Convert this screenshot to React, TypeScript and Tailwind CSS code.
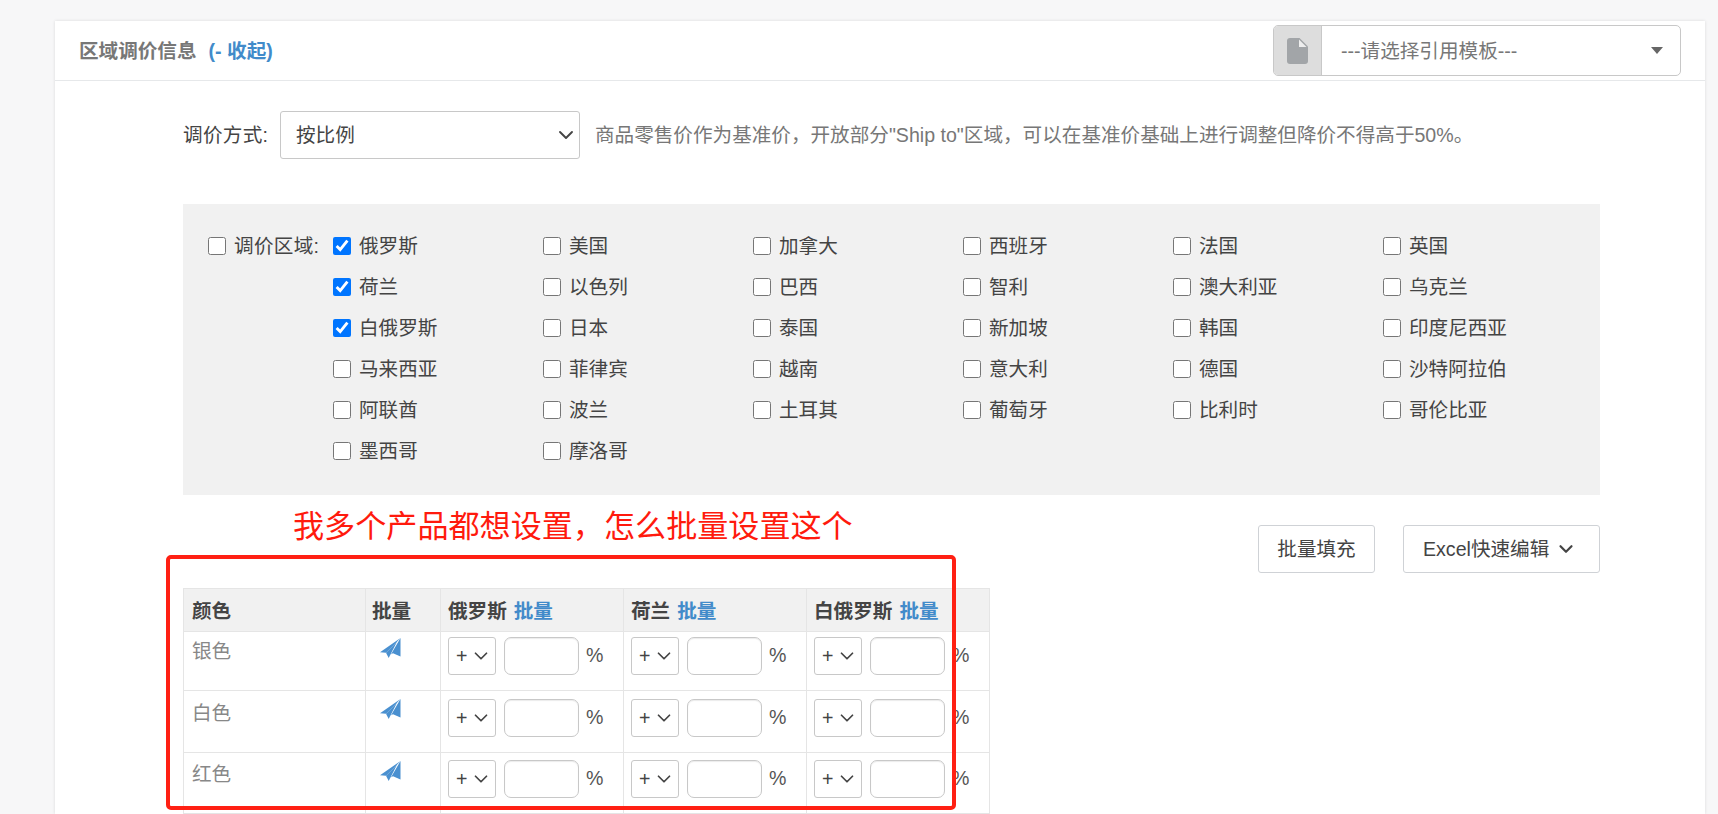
import React from "react";
import { ChevronDown } from "lucide-react";

const regions = [
  ["俄罗斯", true], ["美国"], ["加拿大"], ["西班牙"], ["法国"], ["英国"],
  ["荷兰", true], ["以色列"], ["巴西"], ["智利"], ["澳大利亚"], ["乌克兰"],
  ["白俄罗斯", true], ["日本"], ["泰国"], ["新加坡"], ["韩国"], ["印度尼西亚"],
  ["马来西亚"], ["菲律宾"], ["越南"], ["意大利"], ["德国"], ["沙特阿拉伯"],
  ["阿联酋"], ["波兰"], ["土耳其"], ["葡萄牙"], ["比利时"], ["哥伦比亚"],
  ["墨西哥"], ["摩洛哥"],
] as [string, boolean?][];

const PlaneIcon = () => (
  <svg viewBox="0 0 21 20" className="w-[21px] h-[21px] fill-[#4a90d0]" preserveAspectRatio="none">
    <path d="M0 13.5L20.5 0L17 3.5L6 14Z" />
    <path d="M6 14L17 3.5L8.7 19Z" />
    <path d="M20.5 0V17.5L13 14.5L11 15.5Z" />
  </svg>
);

const FileIcon = () => (
  <svg viewBox="0 0 21 26" className="w-[21px] h-[26px]">
    <path
      d="M3 0H12.5L21 8.5V23a3 3 0 0 1-3 3H3a3 3 0 0 1-3-3V3a3 3 0 0 1 3-3z"
      className="fill-[#a2a5a8]"
    />
    <path d="M12 1.5L19.5 9H12z" className="fill-[#eeeeee]" />
  </svg>
);

// one "+ v  [   ] %" group of a table cell
const PriceCell = ({ pad }: { pad: string }) => (
  <td className={`border border-[#e5e5e5] align-top pl-[7px] ${pad}`}>
    <div className="flex items-center">
      <div className="w-[48px] h-[38px] border border-[#c8c8c8] rounded-[3px] flex items-center pl-[7px] text-[#444]">
        <span className="w-[14px]">+</span>
        <ChevronDown className="w-[22px] h-[22px] shrink-0" strokeWidth={1.9} />
      </div>
      <div className="w-[75px] h-[38px] ml-[8px] border border-[#c8c8c8] rounded-[7px] shadow-[inset_0_1px_1px_rgba(0,0,0,0.08)]"></div>
      <span className="ml-[7px] pb-[3px] text-[#555]">%</span>
    </div>
  </td>
);

const rows = [
  { name: "银色", height: "h-[59px]", text: "pt-[5px]", icon: "pt-[6px]", cell: "pt-[5px]" },
  { name: "白色", height: "h-[62px]", text: "pt-[8px]", icon: "pt-[8px]", cell: "pt-[8px]" },
  { name: "红色", height: "h-[61px]", text: "pt-[7px]", icon: "pt-[8px]", cell: "pt-[7px]" },
];
const heads = ["俄罗斯", "荷兰", "白俄罗斯"];

export default function App() {
  return (
    <div
      className="relative h-[814px] overflow-hidden bg-[#f7f7f8] pt-[21px] pl-[55px] text-[19.6px] leading-[28px] text-[#555]"
      style={{ fontFamily: '"Liberation Sans", "Noto Sans CJK SC", sans-serif' }}
    >
      <div className="w-[1650px] h-[793px] bg-white shadow-[0_0_3px_rgba(0,0,0,0.12)]">
        {/* Header */}
        <div className="h-[60px] border-b border-[#e6e8ea] flex items-center justify-between pl-[24px] pr-[24px]">
          <div className="font-bold text-[#777] pt-[1px]">
            区域调价信息<span className="ml-[12px] text-[#428bca]">(- 收起)</span>
          </div>
          <div className="flex w-[408px] h-[51px] border border-[#c8c8c8] rounded-[5px] overflow-hidden">
            <div className="w-[48px] bg-[#dddddd] border-r border-[#c8c8c8] flex items-center justify-center">
              <FileIcon />
            </div>
            <div className="flex-1 flex items-center justify-between pl-[19px] pr-[17px] text-[#777]">
              <span>---请选择引用模板---</span>
              <span className="border-x-[6px] border-x-transparent border-t-[7px] border-t-[#666]"></span>
            </div>
          </div>
        </div>

        <div className="pl-[128px] pr-[105px]">
          {/* Pricing mode */}
          <div className="flex items-center pt-[30px]">
            <span className="text-[#444] w-[97px] tracking-[0.3px]">调价方式:</span>
            <div className="w-[300px] h-[48px] border border-[#c8c8c8] rounded-[3px] flex items-center justify-between pl-[15px] pr-[1px] text-[#444]">
              <span>按比例</span>
              <ChevronDown className="w-[24px] h-[24px]" strokeWidth={1.9} />
            </div>
            <span className="ml-[15px] text-[#777]">
              商品零售价作为基准价，开放部分"Ship to"区域，可以在基准价基础上进行调整但降价不得高于50%。
            </span>
          </div>

          {/* Regions */}
          <div className="mt-[45px] h-[291px] bg-[#f1f1f1] pt-[21px] flex">
            <label className="w-[150px] h-[41px] flex items-center pl-[25px] shrink-0">
              <input type="checkbox" className="w-[18px] h-[18px] shrink-0" />
              <span className="ml-[8px] text-[#444] tracking-[0.3px]">调价区域:</span>
            </label>
            <div className="grid grid-cols-[repeat(6,210px)] auto-rows-[41px]">
              {regions.map(([name, checked]) => (
                <label key={name} className="flex items-center">
                  <input type="checkbox" defaultChecked={checked} className="w-[18px] h-[18px] shrink-0" />
                  <span className="ml-[8px] text-[#444]">{name}</span>
                </label>
              ))}
            </div>
          </div>

          {/* Bulk buttons */}
          <div className="flex justify-end gap-[28px] mt-[30px]">
            <div className="w-[117px] h-[48px] border border-[#cfd2d6] rounded-[3px] flex items-center justify-center text-[#444]">
              批量填充
            </div>
            <div className="w-[197px] h-[48px] border border-[#cfd2d6] rounded-[3px] flex items-center pl-[19px] gap-[6px] text-[#444]">
              Excel快速编辑
              <ChevronDown className="w-[22px] h-[22px]" strokeWidth={2.4} />
            </div>
          </div>

          {/* Table */}
          <table className="mt-[15px] w-[806px] table-fixed border-collapse">
            <colgroup>
              <col className="w-[182px]" />
              <col className="w-[75px]" />
              <col className="w-[183px]" />
              <col className="w-[183px]" />
              <col className="w-[183px]" />
            </colgroup>
            <thead>
              <tr className="h-[43px] bg-[#f1f1f1] text-left font-bold text-[#444]">
                <th className="border border-[#e5e5e5] pl-[8px] pt-[2px]">颜色</th>
                <th className="border border-[#e5e5e5] pl-[6px] pt-[2px]">批量</th>
                {heads.map((h) => (
                  <th key={h} className="border border-[#e5e5e5] pl-[7px] pt-[2px]">
                    {h}
                    <span className="ml-[7px] text-[#428bca]">批量</span>
                  </th>
                ))}
              </tr>
            </thead>
            <tbody>
              {rows.map((r) => (
                <tr key={r.name} className={r.height}>
                  <td className={`border border-[#e5e5e5] align-top pl-[8px] text-[#888] ${r.text}`}>{r.name}</td>
                  <td className={`border border-[#e5e5e5] align-top pl-[14px] ${r.icon}`}>
                    <PlaneIcon />
                  </td>
                  <PriceCell pad={r.cell} />
                  <PriceCell pad={r.cell} />
                  <PriceCell pad={r.cell} />
                </tr>
              ))}
            </tbody>
          </table>
        </div>
      </div>

      {/* Red annotation drawn over the page */}
      <div className="absolute left-[293px] top-[509px] text-[31.1px] leading-[36px] text-[#ff1a0d] whitespace-nowrap">
        我多个产品都想设置，怎么批量设置这个
      </div>
      <div className="absolute left-[166px] top-[555px] w-[790px] h-[255px] border-[4px] border-[#ff2013] rounded-[5px]"></div>
    </div>
  );
}
